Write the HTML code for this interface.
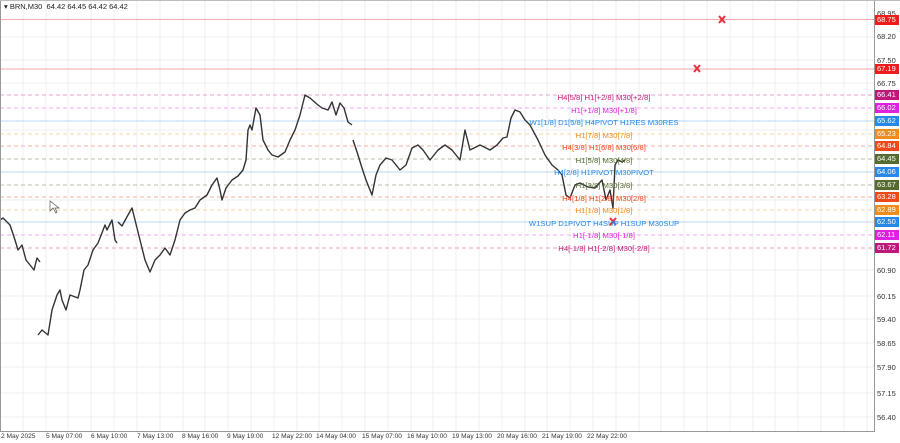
<!DOCTYPE html><html><head><style>
body{margin:0;width:900px;height:443px;background:#fff;overflow:hidden;position:relative;font-family:"Liberation Sans",sans-serif}
.ax{position:absolute;left:877px;font-size:7.5px;color:#333}
.pl{position:absolute;left:875px;width:22px;height:10px;font-size:7.5px;color:#fff;line-height:10px;padding-left:2px}
.t{position:absolute;font-size:7.7px;white-space:nowrap;transform:translateX(-50%)}
.dt{position:absolute;top:433px;font-size:6.6px;color:#333;white-space:nowrap}
</style></head><body>
<svg width="900" height="443" style="position:absolute;left:0;top:0">
<g stroke="#efefef" stroke-width="1">
<path d="M23 0V431M46 0V431M68 0V431M91 0V431M114 0V431M137 0V431M160 0V431M183 0V431M205 0V431M228 0V431M251 0V431M274 0V431M297 0V431M319 0V431M342 0V431M365 0V431M388 0V431M411 0V431M433 0V431M456 0V431M479 0V431M502 0V431M525 0V431M547 0V431M570 0V431M593 0V431M616 0V431M639 0V431M661 0V431M684 0V431M707 0V431M730 0V431M753 0V431M775 0V431M798 0V431M821 0V431M844 0V431M867 0V431"/>
<path d="M0 37H875M0 60H875M0 83H875M0 130H875M0 200H875M0 270H875M0 296H875M0 319H875M0 343H875M0 367H875M0 393H875M0 417H875"/>
</g>
<line x1="0" y1="19.5" x2="875" y2="19.5" stroke="#f4a8a8"/>
<line x1="0" y1="69" x2="875" y2="69" stroke="#f4a8a8"/>
<g stroke-dasharray="4,3" stroke-width="1">
<line x1="0" y1="95" x2="875" y2="95" stroke="#e8a0c8"/>
<line x1="0" y1="108" x2="875" y2="108" stroke="#f0a8f0"/>
<line x1="0" y1="134" x2="875" y2="134" stroke="#f8d4a8"/>
<line x1="0" y1="146" x2="875" y2="146" stroke="#f4b0a0"/>
<line x1="0" y1="159" x2="875" y2="159" stroke="#b8c0a8"/>
<line x1="0" y1="185" x2="875" y2="185" stroke="#b8c0a8"/>
<line x1="0" y1="197" x2="875" y2="197" stroke="#f4b0a0"/>
<line x1="0" y1="210" x2="875" y2="210" stroke="#f8d4a8"/>
<line x1="0" y1="235" x2="875" y2="235" stroke="#f0a8f0"/>
<line x1="0" y1="248" x2="875" y2="248" stroke="#e8a0c8"/>
</g>
<line x1="0" y1="121" x2="875" y2="121" stroke="#b8d8f4"/>
<line x1="0" y1="172" x2="875" y2="172" stroke="#b8d8f4"/>
<line x1="0" y1="222" x2="875" y2="222" stroke="#b8d8f4"/>
<g fill="none" stroke="#333" stroke-width="1.4" stroke-linejoin="round">
<polyline points="0,220 3,218 10,225 15,240 18,250 22,245 26,260 30,265 34,270 37,258 40,262"/>
<polyline points="38,335 42,330 48,335 52,310 57,295 60,290 62,300 66,310 70,295 78,298 80,290 84,270 88,265 93,250 98,243 100,238 105,225 107,230 112,220 115,240 117,243"/>
<polyline points="118,222 122,226 128,215 132,208 135,220 140,240 145,260 150,272 155,260 160,255 165,248 170,255 175,240 180,220 185,213 190,210 195,208 200,200 207,195 212,185 217,178 220,190 222,200 226,188 232,180 238,176 243,170 246,160 248,130 250,125 252,130 256,108 260,115 263,140 268,150 272,155 278,157 285,152 290,140 295,130 300,115 305,95 310,98 318,105 322,108 328,110 332,102 336,115 340,103 344,108 348,122 352,125"/>
<polyline points="353,140 358,155 362,168 366,180 370,190 372,195 376,175 380,165 386,158 392,160 400,170 406,165 412,148 418,145 423,150 430,160 438,150 445,145 452,150 460,160 465,130 470,150 480,145 490,150 497,145 503,138 507,137 511,118 515,110 520,112 525,120 530,125 538,140 545,155 552,165 558,170 562,175 566,195 570,198 575,185 580,183 588,187 595,188 602,180 606,200 610,190 613,208 615,165 618,160 622,162 625,160"/>
</g>
<g stroke="#e8303a" stroke-width="2">
<path d="M719 16l6 7M725 16l-6 7M694 65l6 7M700 65l-6 7M610 218l6 7M616 218l-6 7"/>
</g>
<path d="M50 201l0 10 3-3 3 5 1-1-2-4 4 0z" fill="#fff" stroke="#555" stroke-width="0.7"/>
<line x1="0.5" y1="0" x2="0.5" y2="431" stroke="#999"/>
<line x1="874.5" y1="0" x2="874.5" y2="431" stroke="#999"/>
<line x1="0" y1="431.5" x2="875" y2="431.5" stroke="#999"/>
<line x1="0" y1="0.5" x2="900" y2="0.5" stroke="#bbb"/>
</svg>
<div style="position:absolute;left:4px;top:2px;font-size:7.5px;color:#222">▾ BRN,M30&nbsp; 64.42 64.45 64.42 64.42</div>
<div class="ax" style="top:9px">68.95</div><div class="ax" style="top:32px">68.20</div><div class="ax" style="top:56px">67.50</div><div class="ax" style="top:79px">66.75</div><div class="ax" style="top:266px">60.90</div><div class="ax" style="top:292px">60.15</div><div class="ax" style="top:315px">59.40</div><div class="ax" style="top:339px">58.65</div><div class="ax" style="top:363px">57.90</div><div class="ax" style="top:389px">57.15</div><div class="ax" style="top:413px">56.40</div>
<div class="pl" style="top:15px;background:#f01c1c">68.75</div>
<div class="pl" style="top:64px;background:#f01c1c">67.19</div>
<div class="pl" style="top:90px;background:#c0187a">66.41</div>
<div class="pl" style="top:103px;background:#e020e0">66.02</div>
<div class="pl" style="top:116px;background:#2888e8">65.62</div>
<div class="pl" style="top:129px;background:#f08c1c">65.23</div>
<div class="pl" style="top:141px;background:#f04818">64.84</div>
<div class="pl" style="top:154px;background:#556b2f">64.45</div>
<div class="pl" style="top:167px;background:#2888e8">64.06</div>
<div class="pl" style="top:180px;background:#556b2f">63.67</div>
<div class="pl" style="top:192px;background:#f04818">63.28</div>
<div class="pl" style="top:205px;background:#f08c1c">62.89</div>
<div class="pl" style="top:217px;background:#2888e8">62.50</div>
<div class="pl" style="top:230px;background:#e020e0">62.11</div>
<div class="pl" style="top:243px;background:#c0187a">61.72</div>
<div class="t" style="left:604px;top:93px;color:#c0187a">H4[5/8] H1[+2/8] M30[+2/8]</div>
<div class="t" style="left:604px;top:106px;color:#e020e0">H1[+1/8] M30[+1/8]</div>
<div class="t" style="left:604px;top:118px;color:#2888e8">W1[1/8] D1[5/8] H4PIVOT H1RES M30RES</div>
<div class="t" style="left:604px;top:131px;color:#f08c1c">H1[7/8] M30[7/8]</div>
<div class="t" style="left:604px;top:143px;color:#f04818">H4[3/8] H1[6/8] M30[6/8]</div>
<div class="t" style="left:604px;top:156px;color:#556b2f">H1[5/8] M30[4/8]</div>
<div class="t" style="left:604px;top:168px;color:#2888e8">H4[2/8] H1PIVOT M30PIVOT</div>
<div class="t" style="left:604px;top:181px;color:#556b2f">H1[3/8] M30[3/8]</div>
<div class="t" style="left:604px;top:194px;color:#f04818">H4[1/8] H1[2/8] M30[2/8]</div>
<div class="t" style="left:604px;top:206px;color:#f08c1c">H1[1/8] M30[1/8]</div>
<div class="t" style="left:604px;top:219px;color:#2888e8">W1SUP D1PIVOT H4SUP H1SUP M30SUP</div>
<div class="t" style="left:604px;top:231px;color:#e020e0">H1[-1/8] M30[-1/8]</div>
<div class="t" style="left:604px;top:244px;color:#c0187a">H4[-1/8] H1[-2/8] M30[-2/8]</div>
<div class="dt" style="left:1px">2 May 2025</div><div class="dt" style="left:46px">5 May 07:00</div><div class="dt" style="left:91px">6 May 10:00</div><div class="dt" style="left:137px">7 May 13:00</div><div class="dt" style="left:182px">8 May 16:00</div><div class="dt" style="left:227px">9 May 19:00</div><div class="dt" style="left:272px">12 May 22:00</div><div class="dt" style="left:316px">14 May 04:00</div><div class="dt" style="left:362px">15 May 07:00</div><div class="dt" style="left:407px">16 May 10:00</div><div class="dt" style="left:452px">19 May 13:00</div><div class="dt" style="left:497px">20 May 16:00</div><div class="dt" style="left:542px">21 May 19:00</div><div class="dt" style="left:587px">22 May 22:00</div>
</body></html>
